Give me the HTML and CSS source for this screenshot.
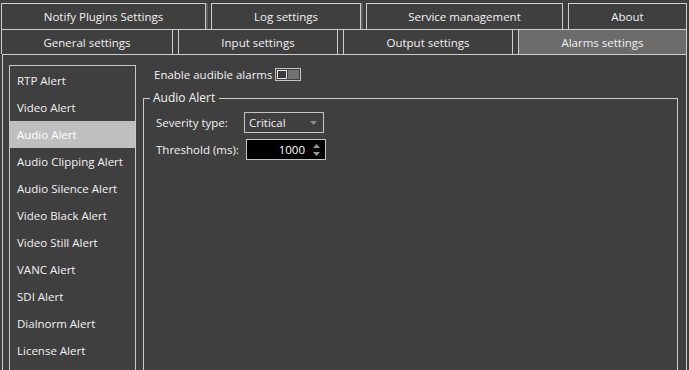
FILE: index.html
```html
<!DOCTYPE html>
<html>
<head>
<meta charset="utf-8">
<link rel="stylesheet" href="styles.css">
</head>
<body>
<div class="tabs">
  <div class="tabrow row1">
    <div class="tab w-notify">Notify Plugins Settings</div>
    <div class="tab w-log">Log settings</div>
    <div class="tab w-service">Service management</div>
    <div class="tab w-about">About</div>
  </div>
  <div class="tabrow row2">
    <div class="tab w-general">General settings</div>
    <div class="tab w-input">Input settings</div>
    <div class="tab w-output">Output settings</div>
    <div class="tab w-alarms active">Alarms settings</div>
  </div>
</div>
<div class="pane">
  <ul class="list">
    <li>RTP Alert</li>
    <li>Video Alert</li>
    <li class="selected">Audio Alert</li>
    <li>Audio Clipping Alert</li>
    <li>Audio Silence Alert</li>
    <li>Video Black Alert</li>
    <li>Video Still Alert</li>
    <li>VANC Alert</li>
    <li>SDI Alert</li>
    <li>Dialnorm Alert</li>
    <li>License Alert</li>
  </ul>
  <div class="right">
    <div class="enable">
      <span>Enable audible alarms</span>
      <span class="toggle"><span class="knob"></span><span class="track"></span></span>
    </div>
    <fieldset class="group">
      <legend>Audio Alert</legend>
      <div class="form">
        <div class="row">
          <span class="label">Severity type:</span>
          <div class="combo"><span>Critical</span>
            <svg class="arrow" width="7" height="4" viewBox="0 0 7 4"><path d="M0 0H7L3.5 4Z" fill="#8c8c8c"/></svg>
          </div>
        </div>
        <div class="row">
          <span class="label">Threshold (ms):</span>
          <div class="spin"><span class="val">1000</span>
            <svg class="spinarrows" width="7" height="12" viewBox="0 0 7 12"><path d="M0 4H7L3.5 0Z" fill="#9a9a9a"/><path d="M0 8H7L3.5 12Z" fill="#9a9a9a"/></svg>
          </div>
        </div>
      </div>
    </fieldset>
  </div>
</div>
</body>
</html>
```
FILE: styles.css
```css
* { box-sizing: border-box; }
html, body { margin: 0; padding: 0; }
body {
  width: 689px;
  height: 370px;
  overflow: hidden;
  background: #3f3f3f;
  color: #f2f2f2;
  font-family: "Open Sans", "Noto Sans", sans-serif;
  font-size: 11.5px;
}
.tabs { padding-top: 3px; }
.tabrow { display: flex; gap: 5px; padding-left: 1px; }
.tab {
  border: 1px solid #cdcdcd;
  display: flex;
  align-items: center;
  justify-content: center;
  background: #3f3f3f;
}
.row1 .tab { height: 27px; padding-bottom: 1px; }
.row2 { margin-top: -1px; }
.row2 .tab { height: 25px; border-bottom: none; padding-top: 1px; }
.w-notify { width: 205px; box-shadow: 2px 0 0 #5e5e5e; }
.w-log { width: 150px; box-shadow: 2px 0 0 #5e5e5e; }
.w-service { width: 197px; }
.w-about { width: 119px; }
.w-general { width: 172px; }
.w-input { width: 160px; }
.w-output { width: 170px; }
.w-alarms { width: 169px; }
.tab.active { background: #6b6b6b; }

.pane {
  margin-left: 2px;
  width: 685px;
  height: 330px;
  border: 1px solid #cdcdcd;
  border-bottom: none;
  display: flex;
  padding: 10px 8px 0 6px;
}
.list {
  list-style: none;
  margin: 0;
  padding: 1px 0 0 0;
  width: 127px;
  height: 320px;
  border: 1px solid #c8c8c8;
  border-bottom: none;
  flex: none;
}
.list li {
  height: 27px;
  line-height: 27px;
  padding-left: 7px;
  white-space: nowrap;
}
.list li.selected { background: #bfbfbf; color: #ffffff; }

.right {
  flex: 1;
  margin-left: 7px;
  display: flex;
  flex-direction: column;
}
.enable {
  height: 16px;
  display: flex;
  align-items: center;
  padding-left: 11px;
  gap: 2px;
  margin-top: 1px;
}
.toggle {
  width: 26px;
  height: 13px;
  border: 1px solid #c4c4c4;
  display: flex;
  padding: 1px;
  gap: 1px;
  margin-top: 1px;
}
.knob {
  width: 10px;
  height: 9px;
  border: 1px solid #e8e8e8;
  background: #3a3a3a;
}
.track { flex: 1; background: #727272; }

.group {
  margin: 8px 0 0 0;
  padding: 0;
  border: 1px solid #cdcdcd;
  border-bottom: none;
  flex: 1;
  min-width: 0;
}
.group legend {
  margin-left: 6px;
  padding: 0 4px 0 3px;
  line-height: 16px;
  font-size: 12px;
}
.form {
  padding: 6px 0 0 12px;
  display: flex;
  flex-direction: column;
  gap: 6px;
}
.row { display: flex; align-items: center; height: 21px; }
.label { width: 88px; white-space: nowrap; }
.combo {
  width: 80px;
  height: 21px;
  border: 1px solid #c4c4c4;
  display: flex;
  align-items: center;
  justify-content: space-between;
  padding: 0 6px 0 4px;
}
.spin {
  width: 80px;
  height: 21px;
  margin-left: 2px;
  border: 1px solid #c4c4c4;
  background: #000;
  display: flex;
  align-items: center;
  justify-content: flex-end;
  padding: 0 5px 0 4px;
  gap: 8px;
}
.val { color: #fff; }
.spinarrows { display: block; }
```
